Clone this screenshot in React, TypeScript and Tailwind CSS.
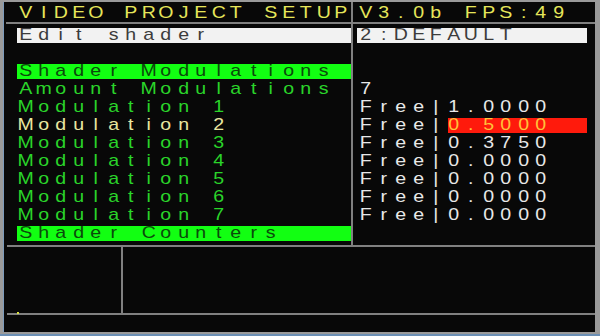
import React from "react";

// celdas de ancho fijo para imitar la fuente bitmap del OSD
function Cells({ text }: { text: string }) {
  return (
    <>
      {Array.from(text).map((ch, i) => (
        <span key={i} className="inline-block w-[17.5px] text-center scale-x-[1.15]">
          {ch === " " ? "\u00a0" : ch}
        </span>
      ))}
    </>
  );
}

type Row = {
  label: string;
  kind?: "edit" | "section" | "item" | "active" | "blank";
  right?: string;
  box?: string;
  hot?: string;
};

const rows: Row[] = [
  { label: "Edit shader", kind: "edit", box: "2:DEFAULT" },
  { label: "", kind: "blank" },
  { label: "Shader Modulations", kind: "section" },
  { label: "Amount Modulations", kind: "item", right: "7" },
  { label: "Modulation 1", kind: "item", right: "Free|1.0000" },
  { label: "Modulation 2", kind: "active", right: "Free|", hot: "0.5000" },
  { label: "Modulation 3", kind: "item", right: "Free|0.3750" },
  { label: "Modulation 4", kind: "item", right: "Free|0.0000" },
  { label: "Modulation 5", kind: "item", right: "Free|0.0000" },
  { label: "Modulation 6", kind: "item", right: "Free|0.0000" },
  { label: "Modulation 7", kind: "item", right: "Free|0.0000" },
  { label: "Shader Counters", kind: "section" },
];

function LeftRow({ row }: { row: Row }) {
  if (row.kind === "edit") {
    return (
      <div className="h-[18px] flex items-center pl-[13px]">
        <div className="h-[15px] w-full flex items-center bg-[#f2f2f2] text-[#3c3c3c]">
          <Cells text={row.label} />
        </div>
      </div>
    );
  }
  if (row.kind === "section") {
    return (
      <div className="h-[18px] flex items-center pl-[13px]">
        <div className="h-[15px] w-full flex items-center bg-[#12ff12] text-[#0b4a0b]">
          <Cells text={row.label} />
        </div>
      </div>
    );
  }
  return (
    <div
      className={
        row.kind === "active"
          ? "h-[18px] flex items-center pl-[13px] text-[#e8e6a0]"
          : "h-[18px] flex items-center pl-[13px] text-[#2ad42a]"
      }
    >
      <Cells text={row.label} />
    </div>
  );
}

function RightRow({ row }: { row: Row }) {
  if (row.box) {
    return (
      <div className="h-[18px] flex items-center pl-[4px] pr-[8px]">
        <div className="h-[15px] w-full flex items-center bg-[#f2f2f2] text-[#3c3c3c]">
          <Cells text={row.box} />
        </div>
      </div>
    );
  }
  if (row.hot) {
    return (
      <div className="h-[18px] flex items-center pl-[4px] pr-[8px] text-[#e8e8e8]">
        <Cells text={row.right ?? ""} />
        <div className="h-[15px] flex-1 flex items-center ml-[3px] bg-[#ff1a0c] text-[#ffc23a]">
          <span className="-ml-[3px] flex">
            <Cells text={row.hot} />
          </span>
        </div>
      </div>
    );
  }
  return (
    <div className="h-[18px] flex items-center pl-[4px] text-[#e8e8e8]">
      <Cells text={row.right ?? ""} />
    </div>
  );
}

export default function App() {
  return (
    <div className="w-[600px] h-[336px] flex flex-col bg-[#9a9a9a] pt-[2px] pl-[3px] pr-[5px] pb-[2px] border-b-[2px] border-[#6b8fb5] font-['Liberation_Sans',Arial,sans-serif] text-[17px] leading-[18px]">
      <div className="flex-1 flex flex-col bg-[#080808] border-l border-[#7d9bbb]">
        {/* parte superior: menu + valores */}
        <div className="h-[243px] flex">
          <div className="w-[347px] flex flex-col">
            <div className="h-[20px] pt-[2px] pl-[13px] flex text-[#e6e65a]">
              <Cells text="VIDEO PROJECT SETUP" />
            </div>
            <div className="h-[2px] ml-[2px] bg-[#808080]" />
            <div className="pt-[2px]">
              {rows.map((r, i) => (
                <LeftRow key={i} row={r} />
              ))}
            </div>
          </div>
          <div className="w-[2px] bg-[#808080]" />
          <div className="flex-1 flex flex-col">
            <div className="h-[20px] pt-[2px] pl-[4px] flex text-[#e6e65a]">
              <Cells text="V3.0b FPS:49" />
            </div>
            <div className="h-[2px] bg-[#808080]" />
            <div className="pt-[2px]">
              {rows.map((r, i) => (
                <RightRow key={i} row={r} />
              ))}
            </div>
          </div>
        </div>

        <div className="h-[2px] ml-[3px] bg-[#808080]" />
        <div className="h-[66px] flex">
          <div className="w-[117px]" />
          <div className="w-[2px] bg-[#808080]" />
          <div className="flex-1" />
        </div>
        <div className="relative h-[2px] ml-[3px] bg-[#808080]">
          <span className="absolute left-[10px] -top-[1px] w-[2px] h-[2px] bg-[#d8e040]" />
        </div>
        <div className="flex-1" />
      </div>
    </div>
  );
}
